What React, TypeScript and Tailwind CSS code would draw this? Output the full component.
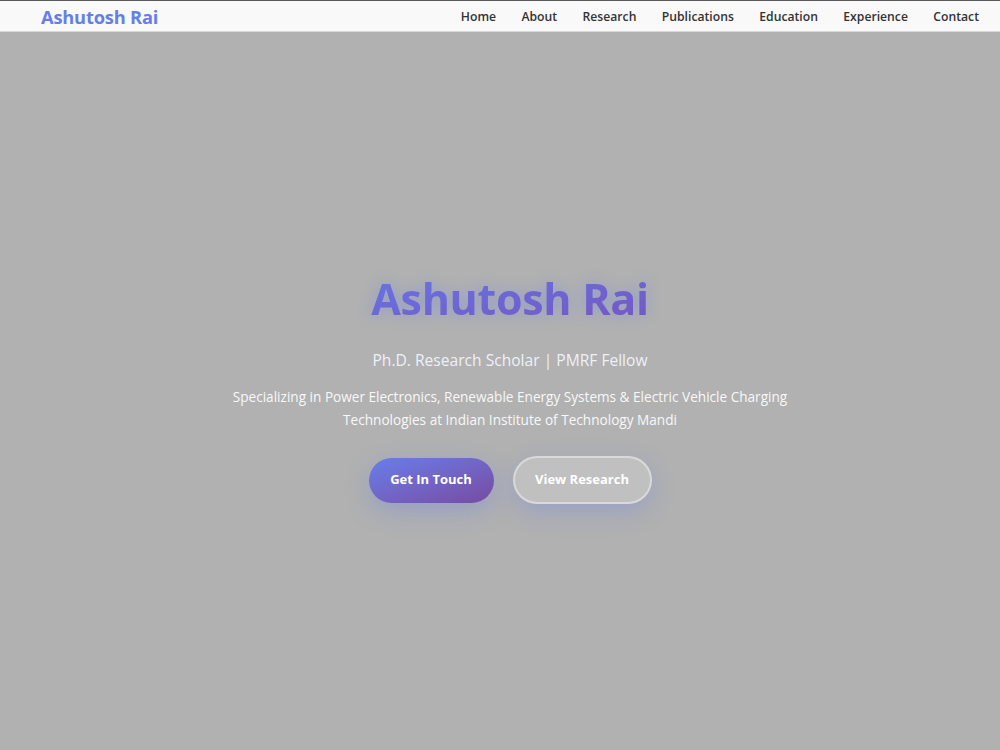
import React from "react";

const font = { fontFamily: '"Open Sans", "Noto Sans", sans-serif' };

export default function App() {
  const links = ["Home", "About", "Research", "Publications", "Education", "Experience", "Contact"];
  return (
    <div className="w-[1000px] h-[750px] flex flex-col bg-[#b1b1b1] overflow-hidden border-t border-[#5a5a5a]" style={font}>
      <nav className="h-[31px] shrink-0 bg-[#f9f9f9] border-b border-[#d8d8d8] flex items-center justify-between pl-[41px] pr-[21px]">
        <div className="text-[18.3px] font-bold text-[#667eea] tracking-[-0.2px] pt-[1px]">Ashutosh Rai</div>
        <div className="flex items-center gap-[25.4px] text-[12.2px] font-semibold text-[#333] pt-[2px]">
          {links.map((l) => (
            <span key={l}>{l}</span>
          ))}
        </div>
      </nav>
      <main className="flex-1 flex flex-col items-center pt-[239px] pl-[20px]">
        <h1 className="text-[43px] leading-[56px] font-bold bg-gradient-to-br from-[#6674e6] to-[#7356c2] bg-clip-text text-transparent [filter:drop-shadow(0_0_8px_rgba(102,126,234,0.45))] tracking-[-0.3px]">
          Ashutosh Rai
        </h1>
        <p className="mt-[21px] text-[15.6px] text-[#eef0f8] leading-[24px]">Ph.D. Research Scholar | PMRF Fellow</p>
        <p className="mt-[13px] text-[13.6px] leading-[23px] text-[#f8f8f8] text-center max-w-[600px]">
          Specializing in Power Electronics, Renewable Energy Systems &amp; Electric Vehicle Charging Technologies at Indian Institute of Technology Mandi
        </p>
        <div className="mt-[25px] flex items-center gap-[19px]">
          <button className="w-[125px] h-[45px] rounded-full bg-gradient-to-br from-[#667eea] to-[#764ba2] text-white text-[13px] font-bold shadow-[0_8px_24px_rgba(102,126,234,0.35)]">
            Get In Touch
          </button>
          <button className="w-[139px] h-[48px] rounded-full bg-white/20 border-2 border-white/40 text-white text-[13px] font-bold shadow-[0_8px_24px_rgba(102,126,234,0.3)]">
            View Research
          </button>
        </div>
      </main>
    </div>
  );
}
